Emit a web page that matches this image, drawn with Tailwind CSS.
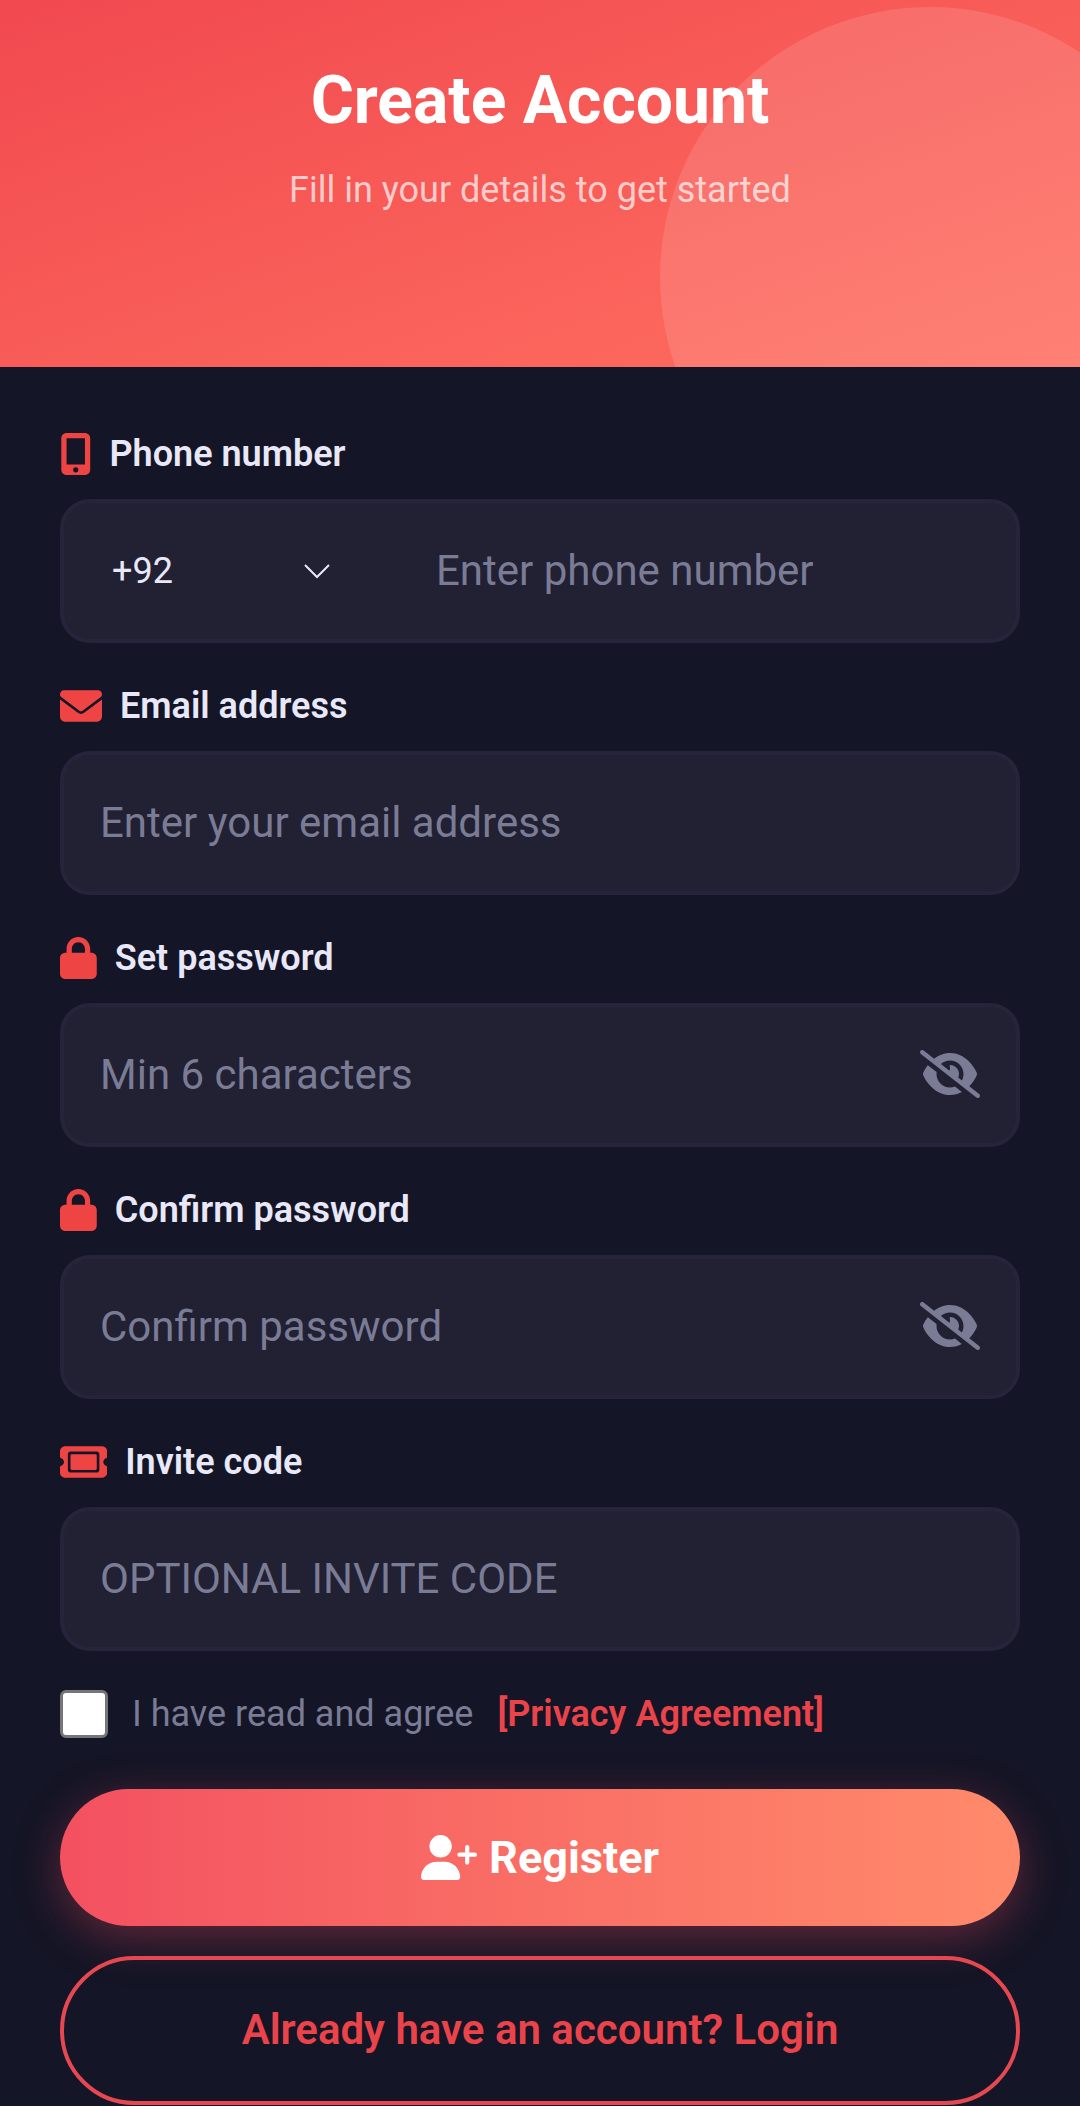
<!DOCTYPE html>
<html lang="en">
<head>
  <meta charset="UTF-8" />
  <meta name="viewport" content="width=device-width, initial-scale=1.0" />
  <title>Create Account</title>
  <script src="https://cdn.jsdelivr.net/npm/@tailwindcss/browser@4"></script>
</head>
<body class="min-h-screen bg-[#141526] font-['Roboto',sans-serif] text-[#e8e8f8]">

  <!-- Header -->
  <header class="relative overflow-hidden bg-linear-160 from-[#f1484f] to-[#ff6f61] px-15 pt-[61px] pb-[151px] text-center">
    <div class="absolute top-[7px] -right-[120px] size-[540px] rounded-full bg-white/12"></div>
    <h1 class="relative text-[66px] leading-20 font-bold text-white">Create Account</h1>
    <p class="relative mt-6 text-[36px] leading-[51px] text-white/70">Fill in your details to get started</p>
  </header>

  <form class="px-15 pt-[66px]">
    <!-- Phone -->
    <div class="mb-[42px]">
      <label for="phone" class="mb-6 flex h-[42px] items-center gap-[18px] text-[36px] font-semibold">
        <svg class="h-[42px] shrink-0 fill-[#ef4444]" viewBox="0 0 384 512"><path d="M16 64C16 28.7 44.7 0 80 0L304 0c35.3 0 64 28.7 64 64l0 384c0 35.3-28.7 64-64 64L80 512c-35.3 0-64-28.7-64-64L16 64zM224 448a32 32 0 1 0 -64 0 32 32 0 1 0 64 0zM304 64L80 64l0 320 224 0 0-320z"/></svg>
        Phone number
      </label>
      <div class="flex h-36 rounded-[30px] border-4 border-[#25243a] bg-[#222033]">
        <div class="relative w-[336px] shrink-0">
          <select aria-label="Country code" class="size-full appearance-none bg-transparent pl-12 text-[36px] outline-none">
            <option>+92</option>
            <option>+91</option>
            <option>+880</option>
          </select>
          <svg class="pointer-events-none absolute top-[60px] left-[239px] h-4 w-7 fill-none stroke-[#e8e8f8] stroke-2" viewBox="0 0 28 16"><path d="M2 2l12 12L26 2"/></svg>
        </div>
        <input id="phone" type="tel" placeholder="Enter phone number" class="w-full min-w-0 bg-transparent px-9 pb-0.5 text-[42px] outline-none placeholder:text-[#7a7c96]" />
      </div>
    </div>

    <!-- Email -->
    <div class="mb-[42px]">
      <label for="email" class="mb-6 flex h-[42px] items-center gap-[18px] text-[36px] font-semibold">
        <svg class="h-[42px] shrink-0 fill-[#ef4444]" viewBox="0 0 512 512"><path d="M48 64C21.5 64 0 85.5 0 112c0 15.1 7.1 29.3 19.2 38.4L236.8 313.6c11.4 8.5 27 8.5 38.4 0L492.8 150.4c12.1-9.1 19.2-23.3 19.2-38.4c0-26.5-21.5-48-48-48L48 64zM0 176L0 384c0 35.3 28.7 64 64 64l384 0c35.3 0 64-28.7 64-64l0-208L294.4 339.2c-22.8 17.1-54 17.1-76.8 0L0 176z"/></svg>
        Email address
      </label>
      <input id="email" type="email" placeholder="Enter your email address" class="block h-36 w-full rounded-[30px] border-4 border-[#25243a] bg-[#222033] px-9 pb-0.5 text-[42px] outline-none placeholder:text-[#7a7c96]" />
    </div>

    <!-- Password -->
    <div class="mb-[42px]">
      <label for="password" class="mb-6 flex h-[42px] items-center gap-[18px] text-[36px] font-semibold">
        <svg class="h-[42px] shrink-0 fill-[#ef4444]" viewBox="0 0 448 512"><path d="M144 144l0 48 160 0 0-48c0-44.2-35.8-80-80-80s-80 35.8-80 80zM80 192l0-48C80 64.5 144.5 0 224 0s144 64.5 144 144l0 48 16 0c35.3 0 64 28.7 64 64l0 192c0 35.3-28.7 64-64 64L64 512c-35.3 0-64-28.7-64-64L0 256c0-35.3 28.7-64 64-64l16 0z"/></svg>
        Set password
      </label>
      <div class="flex h-36 items-center rounded-[30px] border-4 border-[#25243a] bg-[#222033] pr-9 pb-0.5">
        <input id="password" type="password" placeholder="Min 6 characters" class="h-full w-full min-w-0 bg-transparent px-9 text-[42px] outline-none placeholder:text-[#7a7c96]" />
        <button type="button" aria-label="Show password" class="shrink-0">
          <svg class="h-12 w-15 fill-[#7a7c96]" viewBox="0 0 640 512"><path d="M38.8 5.1C28.4-3.1 13.3-1.2 5.1 9.2S-1.2 34.7 9.2 42.9l592 464c10.4 8.2 25.5 6.3 33.7-4.1s6.3-25.5-4.1-33.7L525.6 386.7c39.6-40.6 66.4-86.1 79.9-118.4c3.3-7.9 3.3-16.7 0-24.6c-14.9-35.7-46.2-87.7-93-131.1C465.5 68.8 400.8 32 320 32c-68.2 0-125 26.3-169.3 60.8L38.8 5.1zM223.1 149.5C248.6 126.2 282.7 112 320 112c79.5 0 144 64.5 144 144c0 24.9-6.3 48.3-17.4 68.7L408 294.5c8.4-19.3 10.6-41.4 4.8-63.3c-11.1-41.5-47.8-69.4-88.6-71.1c-5.8-.2-9.2 6.1-7.4 11.7c2.1 6.4 3.3 13.2 3.3 20.3c0 10.2-2.4 19.8-6.6 28.3l-90.3-70.8zM373 389.9c-16.4 6.5-34.3 10.1-53 10.1c-79.5 0-144-64.5-144-144c0-6.9 .5-13.6 1.4-20.2L83.1 161.5C60.3 191.2 44 220.8 34.5 243.7c-3.3 7.9-3.3 16.7 0 24.6c14.9 35.7 46.2 87.7 93 131.1C174.5 443.2 239.2 480 320 480c47.8 0 89.9-12.9 126.2-32.5L373 389.9z"/></svg>
        </button>
      </div>
    </div>

    <!-- Confirm password -->
    <div class="mb-[42px]">
      <label for="confirm" class="mb-6 flex h-[42px] items-center gap-[18px] text-[36px] font-semibold">
        <svg class="h-[42px] shrink-0 fill-[#ef4444]" viewBox="0 0 448 512"><path d="M144 144l0 48 160 0 0-48c0-44.2-35.8-80-80-80s-80 35.8-80 80zM80 192l0-48C80 64.5 144.5 0 224 0s144 64.5 144 144l0 48 16 0c35.3 0 64 28.7 64 64l0 192c0 35.3-28.7 64-64 64L64 512c-35.3 0-64-28.7-64-64L0 256c0-35.3 28.7-64 64-64l16 0z"/></svg>
        Confirm password
      </label>
      <div class="flex h-36 items-center rounded-[30px] border-4 border-[#25243a] bg-[#222033] pr-9 pb-0.5">
        <input id="confirm" type="password" placeholder="Confirm password" class="h-full w-full min-w-0 bg-transparent px-9 text-[42px] outline-none placeholder:text-[#7a7c96]" />
        <button type="button" aria-label="Show password" class="shrink-0">
          <svg class="h-12 w-15 fill-[#7a7c96]" viewBox="0 0 640 512"><path d="M38.8 5.1C28.4-3.1 13.3-1.2 5.1 9.2S-1.2 34.7 9.2 42.9l592 464c10.4 8.2 25.5 6.3 33.7-4.1s6.3-25.5-4.1-33.7L525.6 386.7c39.6-40.6 66.4-86.1 79.9-118.4c3.3-7.9 3.3-16.7 0-24.6c-14.9-35.7-46.2-87.7-93-131.1C465.5 68.8 400.8 32 320 32c-68.2 0-125 26.3-169.3 60.8L38.8 5.1zM223.1 149.5C248.6 126.2 282.7 112 320 112c79.5 0 144 64.5 144 144c0 24.9-6.3 48.3-17.4 68.7L408 294.5c8.4-19.3 10.6-41.4 4.8-63.3c-11.1-41.5-47.8-69.4-88.6-71.1c-5.8-.2-9.2 6.1-7.4 11.7c2.1 6.4 3.3 13.2 3.3 20.3c0 10.2-2.4 19.8-6.6 28.3l-90.3-70.8zM373 389.9c-16.4 6.5-34.3 10.1-53 10.1c-79.5 0-144-64.5-144-144c0-6.9 .5-13.6 1.4-20.2L83.1 161.5C60.3 191.2 44 220.8 34.5 243.7c-3.3 7.9-3.3 16.7 0 24.6c14.9 35.7 46.2 87.7 93 131.1C174.5 443.2 239.2 480 320 480c47.8 0 89.9-12.9 126.2-32.5L373 389.9z"/></svg>
        </button>
      </div>
    </div>

    <!-- Invite code -->
    <div class="mb-[39px]">
      <label for="invite" class="mb-6 flex h-[42px] items-center gap-[18px] text-[36px] font-semibold">
        <svg class="h-[42px] shrink-0 fill-[#ef4444]" viewBox="0 0 576 512"><path d="M64 64C28.7 64 0 92.7 0 128l0 64c0 8.8 7.4 15.7 15.7 18.6C34.5 217.1 48 235 48 256s-13.5 38.9-32.3 45.4C7.4 304.3 0 311.2 0 320l0 64c0 35.3 28.7 64 64 64l448 0c35.3 0 64-28.7 64-64l0-64c0-8.8-7.4-15.7-15.7-18.6C541.5 294.9 528 277 528 256s13.5-38.9 32.3-45.4c8.3-2.9 15.7-9.8 15.7-18.6l0-64c0-35.3-28.7-64-64-64L64 64zm64 112l0 160c0 8.8 7.2 16 16 16l288 0c8.8 0 16-7.2 16-16l0-160c0-8.8-7.2-16-16-16l-288 0c-8.8 0-16 7.2-16 16zM96 160c0-17.7 14.3-32 32-32l320 0c17.7 0 32 14.3 32 32l0 192c0 17.7-14.3 32-32 32l-320 0c-17.7 0-32-14.3-32-32l0-192z"/></svg>
        Invite code
      </label>
      <input id="invite" type="text" placeholder="Optional invite code" class="block h-36 w-full rounded-[30px] border-4 border-[#25243a] bg-[#222033] px-9 pb-0.5 text-[42px] uppercase outline-none placeholder:text-[#7a7c96]" />
    </div>

    <!-- Agreement -->
    <div class="mb-[51px] flex h-12 items-center gap-6 text-[36px]">
      <input id="agree" type="checkbox" class="size-12 shrink-0 appearance-none rounded-md border-3 border-[#767676] bg-white checked:bg-[#ef4444]" />
      <label for="agree" class="text-[#7a7c96]">I have read and agree</label>
      <a href="#" class="font-semibold text-[#ea444a]">[Privacy Agreement]</a>
    </div>

    <!-- Actions -->
    <button type="submit" class="flex h-[137px] w-full items-center justify-center gap-3 rounded-full bg-linear-to-r from-[#f35060] to-[#ff8a6b] text-[45px] font-bold text-white shadow-[0_12px_45px] shadow-[#f04858]/35">
      <svg class="h-[45px] w-14 fill-white" viewBox="0 0 640 512"><path d="M96 128a128 128 0 1 1 256 0A128 128 0 1 1 96 128zM0 482.3C0 383.8 79.8 304 178.3 304l91.4 0C368.2 304 448 383.8 448 482.3c0 16.4-13.3 29.7-29.7 29.7L29.7 512C13.3 512 0 498.7 0 482.3zM504 312l0-64-64 0c-13.3 0-24-10.7-24-24s10.7-24 24-24l64 0 0-64c0-13.3 10.7-24 24-24s24 10.7 24 24l0 64 64 0c13.3 0 24 10.7 24 24s-10.7 24-24 24l-64 0 0 64c0 13.3-10.7 24-24 24s-24-10.7-24-24z"/></svg>
      Register
    </button>
    <a href="#" class="mt-[30px] flex h-[149px] items-center justify-center rounded-full border-4 border-[#e54850] pb-0.5 text-[42px] font-semibold text-[#ea444a]">Already have an account? Login</a>
  </form>

</body>
</html>
